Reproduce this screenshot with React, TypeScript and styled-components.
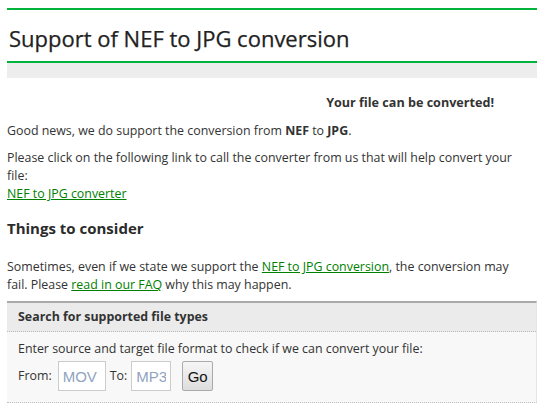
import React from 'react'
import styled, { createGlobalStyle } from 'styled-components'

const GlobalStyle = createGlobalStyle`
  body {
    margin: 0;
    background: #fff;
    font-family: 'Open Sans', 'DejaVu Sans', sans-serif;
    color: #333;
  }
`

const Page = styled.div`
  padding: 8px 13px 0 7px;
  font-size: 12.4px;
  line-height: 18px;
`

const TitleBar = styled.div`
  border-top: 2px solid #00b33c;
  border-bottom: 2px solid #00b33c;
  padding: 4px 2px 0;
  height: 47px;
  display: flex;
  align-items: center;
`

const Title = styled.h1`
  margin: 0;
  font-size: 22px;
  font-weight: 400;
  color: #222;
  -webkit-text-stroke: 0.25px #222;
`

const GreyStrip = styled.div`
  height: 15px;
  background: #ededed;
`

const Verdict = styled.div`
  display: flex;
  justify-content: flex-end;
  padding: 16px 43px 0 0;
  font-weight: 700;
  font-size: 12.6px;
`

const Para = styled.p<{ $gap?: number }>`
  margin: ${(p) => p.$gap ?? 9}px 0 0;
  padding-right: 14px;
`

const Link = styled.a`
  color: #008000;
  text-decoration: underline;
`

const SubTitle = styled.h2`
  margin: 16px 0 0;
  font-size: 15px;
  font-weight: 700;
  color: #2b2b2b;
`

const SearchBox = styled.section`
  margin-top: 7px;
  border-top: 2px solid #aaa;
  border-right: 1px solid #e4e4e4;
  border-bottom: 1px dotted #bbb;
  background: #f8f8f8;
`

const SearchHead = styled.div`
  background: #ebebeb;
  border-bottom: 1px dotted #bbb;
  padding: 5px 11px 5px;
  font-weight: 700;
`

const SearchBody = styled.div`
  padding: 8px 0 11px 11px;
`

const FormRow = styled.div`
  display: flex;
  align-items: center;
  gap: 4px;
  margin-top: 3px;
`

const Label = styled.span<{ $space?: number }>`
  margin-right: ${(p) => p.$space ?? 0}px;
`

const Field = styled.input<{ $w: number }>`
  width: ${(p) => p.$w}px;
  height: 30px;
  box-sizing: border-box;
  border: 1px solid #ccc;
  background: #fff;
  padding: 0 4px;
  font-family: 'Liberation Sans', Arial, sans-serif;
  font-size: 15px;
  color: #333;
  &::placeholder {
    color: #8fa3bf;
  }
`

const GoButton = styled.button`
  height: 30px;
  width: 31px;
  margin-left: 7px;
  border: 1px solid #aaa;
  border-radius: 2px;
  background: linear-gradient(#f6f6f6, #dddddd);
  font-family: 'Liberation Sans', Arial, sans-serif;
  font-size: 15px;
  color: #111;
  padding: 0;
`

export default function App() {
  return (
    <>
      <GlobalStyle />
      <Page>
        <TitleBar>
          <Title>Support of NEF to JPG conversion</Title>
        </TitleBar>
        <GreyStrip />
        <Verdict>Your file can be converted!</Verdict>
        <Para $gap={10}>
          Good news, we do support the conversion from <b>NEF</b> to <b>JPG</b>.
        </Para>
        <Para>
          Please click on the following link to call the converter from us that will help convert your file:
          <br />
          <Link href="#">NEF to JPG converter</Link>
        </Para>
        <SubTitle>Things to consider</SubTitle>
        <Para $gap={21}>
          Sometimes, even if we state we support the <Link href="#">NEF to JPG conversion</Link>, the
          conversion may fail. Please <Link href="#">read in our FAQ</Link> why this may happen.
        </Para>
        <SearchBox>
          <SearchHead>Search for supported file types</SearchHead>
          <SearchBody>
            Enter source and target file format to check if we can convert your file:
            <FormRow>
              <Label $space={2}>From:</Label>
              <Field $w={48} placeholder="MOV" />
              <Label>To:</Label>
              <Field $w={40} placeholder="MP3" />
              <GoButton>Go</GoButton>
            </FormRow>
          </SearchBody>
        </SearchBox>
      </Page>
    </>
  )
}
